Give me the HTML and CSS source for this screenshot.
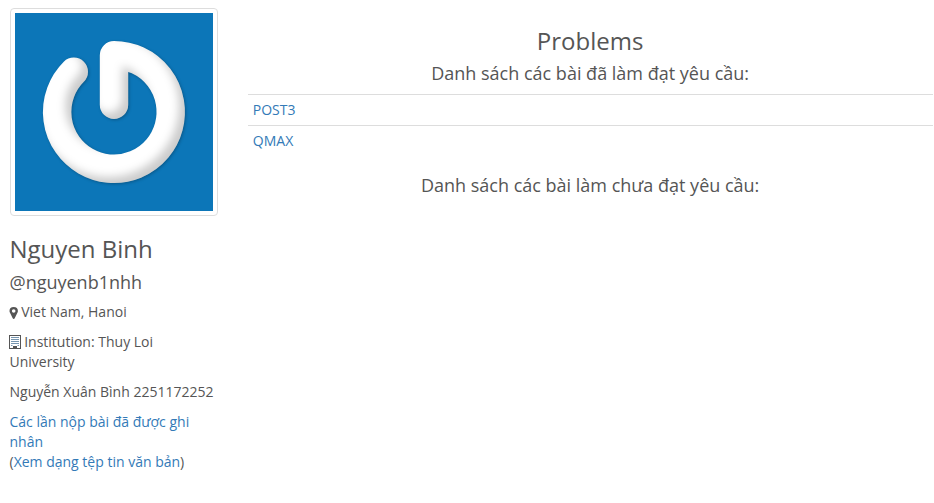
FILE: index.html
```html
<!DOCTYPE html>
<html lang="vi">
<head>
<meta charset="utf-8">
<title>Nguyen Binh</title>
<link rel="stylesheet" href="styles.css">
</head>
<body>
<div class="page">
  <aside class="profile">
    <div class="thumbnail">
      <svg class="avatar" viewBox="0 0 198 198" aria-hidden="true">
        <defs>
          <filter id="bevel" x="-20%" y="-20%" width="140%" height="140%" color-interpolation-filters="sRGB">
            <feGaussianBlur in="SourceAlpha" stdDeviation="4.5" result="soft"/>
            <feOffset in="soft" dx="-6" dy="-6" result="moved"/>
            <feComposite in="SourceAlpha" in2="moved" operator="out" result="edge"/>
            <feFlood flood-color="#000" flood-opacity=".2"/>
            <feComposite in2="edge" operator="in" result="shade"/>
            <feGaussianBlur in="SourceAlpha" stdDeviation="1.5"/>
            <feOffset dx="1" dy="1" result="drop"/>
            <feFlood flood-color="#000" flood-opacity=".25"/>
            <feComposite in2="drop" operator="in" result="dropshade"/>
            <feMerge>
              <feMergeNode in="dropshade"/>
              <feMergeNode in="SourceGraphic"/>
              <feMergeNode in="shade"/>
            </feMerge>
          </filter>
        </defs>
        <rect width="198" height="198" fill="#0c76b8"/>
        <path d="M58.8 58.8A56.8 56.8 0 1 0 99 42.2V91.8" fill="none" stroke="#fff" stroke-width="28.4" stroke-linecap="round" stroke-linejoin="round" filter="url(#bevel)"/>
      </svg>
    </div>
    <h3>Nguyen Binh</h3>
    <h4>@nguyenb1nhh</h4>
    <p><svg class="icon pin" viewBox="0 0 8 12" aria-hidden="true"><path fill-rule="evenodd" d="M3.700 0a4.200 4 0 0 1 4.200 4c0 .8-.2 1.300-.5 1.800L4.700 11.300a1.100 1.100 0 0 1-2 0L0 5.800C-.3 5.300-.5 4.800-.5 4a4.200 4 0 0 1 4.200-4zM3.700 2.200a1.800 1.800 0 1 0 0 3.600 1.800 1.800 0 0 0 0-3.600z"/></svg> Viet Nam, Hanoi</p>
    <p><svg class="icon building" viewBox="0 0 12 14" aria-hidden="true"><path fill-rule="evenodd" d="M0 0h12v14H0zM1 1v12h3v-2h4v2h3V1z"/><path d="M2 2.500h8M2 4.500h8M2 6.500h8M2 8.500h8M2 10.500h1.500M8.500 10.500H10" stroke="#7796b0"/></svg> Institution: Thuy Loi University</p>
    <p>Nguyễn Xuân Bình 2251172252</p>
    <p><a href="#">Các lần nộp bài đã được ghi nhân</a><br>(<a href="#">Xem dạng tệp tin văn bản</a>)</p>
  </aside>
  <main class="problems">
    <h3>Problems</h3>
    <h4>Danh sách các bài đã làm đạt yêu cầu:</h4>
    <table>
      <tr><td><a href="#">POST3</a></td></tr>
      <tr><td><a href="#">QMAX</a></td></tr>
    </table>
    <h4>Danh sách các bài làm chưa đạt yêu cầu:</h4>
  </main>
</div>
</body>
</html>
```
FILE: styles.css
```css
* { box-sizing: border-box; }
body {
  margin: 0;
  background: #fff;
  color: #555;
  font: 14px/20px "Open Sans", sans-serif;
}
a { color: #337ab7; text-decoration: none; }
.page {
  display: flex;
  gap: 30.3px;
  padding: 8px 1.5px 0 9.5px;
}
.profile { width: 208px; flex: none; }
.thumbnail {
  padding: 4px;
  border: 1px solid #ddd;
  border-radius: 4px;
  margin-bottom: 20px;
}
.avatar { display: block; width: 198px; height: 198px; }
h3, h4 { margin: 0 0 10px; font-weight: 400; line-height: 1.1; }
h3 { font-size: 24px; }
h4 { font-size: 18px; }
.profile h3 { margin-bottom: 11px; }
.profile h4 { margin-bottom: 9px; }
p { margin: 0 0 10px; }
.icon { fill: #555; overflow: visible; }
.pin { width: 8px; height: 12px; vertical-align: -2px; }
.building { width: 12px; height: 14px; margin: 0 -.5px; vertical-align: -2px; }
.problems { flex: 1; padding-top: 20px; }
.problems h3, .problems h4 { text-align: center; }
table { width: 100%; border-collapse: collapse; margin-bottom: 20px; }
td { padding: 5px; border-top: 1px solid #ddd; }
```
